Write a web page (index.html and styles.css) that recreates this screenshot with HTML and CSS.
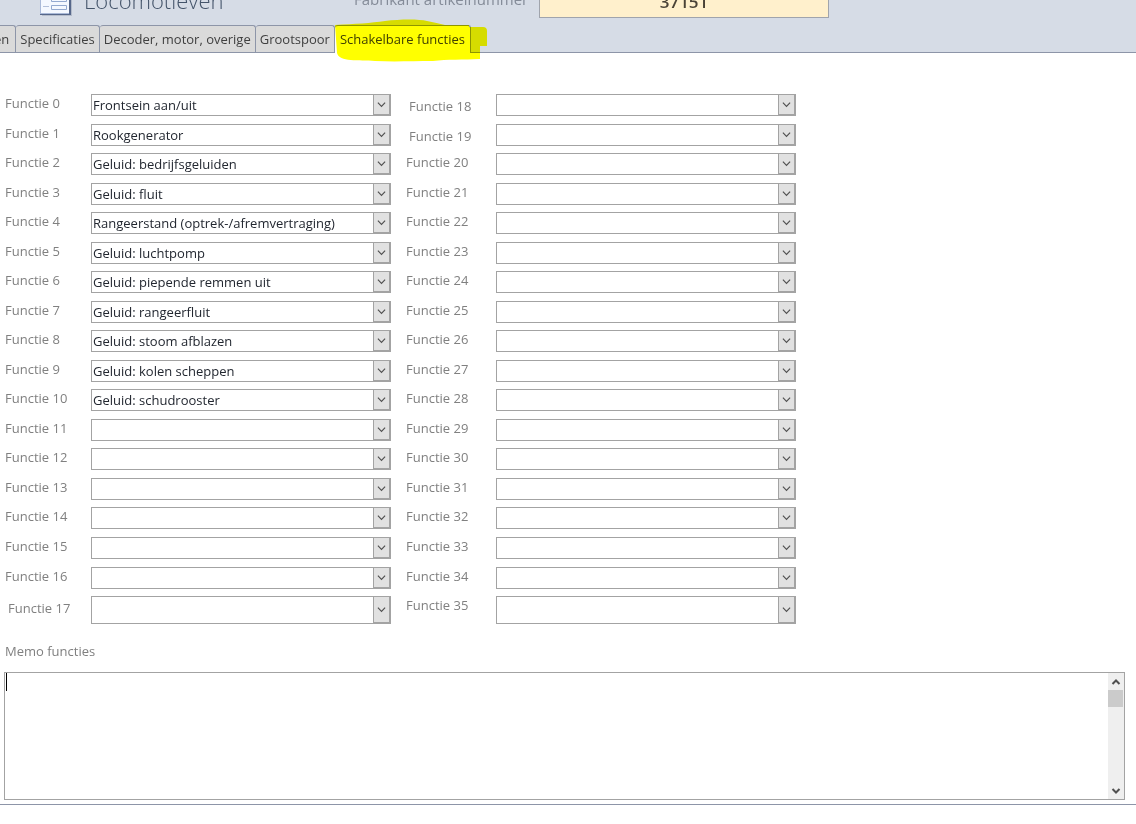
FILE: index.html
```
<!DOCTYPE html>
<html lang="nl">
<head>
<meta charset="utf-8">
<meta name="viewport" content="width=device-width, initial-scale=1">
<title>Locomotieven</title>
<link rel="stylesheet" href="styles.css">
</head>
<body>
<svg class="sprite" aria-hidden="true">
  <symbol id="chevron" viewBox="0 0 10 6"><path d="M1 1l4 4 4-4" fill="none" stroke="#505050" stroke-width="1.3"/></symbol>
</svg>
<header class="header">
  <div class="titlebar">
    <svg class="logo" viewBox="0 0 32 28" aria-hidden="true">
      <path d="M2 0h30v28H2z" fill="#b4bccb"/>
      <path d="M0 0h31v27H0z" fill="#56678a"/>
      <path d="M0 0h29v26H0z" fill="#a9b9d8"/>
      <path d="M1 0h28v25H1z" fill="#f4f8ff"/>
      <path d="M11.500 9.500h15v4h-15zM11.500 17.500h15v4h-15z" fill="#f4f8ff" stroke="#93a9d0"/>
      <path d="M3 11.500h6M3 18.500h6" stroke="#b3c0da"/>
    </svg>
    <h1 class="title">Locomotieven</h1>
    <label class="article-label" for="article">Fabrikant artikelnummer</label>
    <input class="article" id="article" value="37151">
  </div>
  <nav class="tabs">
    <button class="tab tab-first">en</button>
    <button class="tab">Specificaties</button>
    <button class="tab">Decoder, motor, overige</button>
    <button class="tab">Grootspoor</button>
    <button class="tab tab-active">Schakelbare functies
      <svg class="marker" viewBox="0 0 154 44" aria-hidden="true"><path d="M0 6C20 5 36 4 50 2C66 0 84 0 92 2Q102 4 110 6H134V8H148Q152 8 152 12V27H145V40C128 41 112 40 98 42C78 42 60 43 40 42C24 41 4 43 2 34Z" fill="#ff0"/></svg>
    </button>
  </nav>
</header>
<main class="page">
  <div class="columns">
    <div class="column">
      <div class="row"><label for="f0">Functie 0</label><span class="combo"><select id="f0"><option>Frontsein aan/uit</option></select><svg><use href="#chevron"/></svg></span></div>
      <div class="row"><label for="f1">Functie 1</label><span class="combo"><select id="f1"><option>Rookgenerator</option></select><svg><use href="#chevron"/></svg></span></div>
      <div class="row"><label for="f2">Functie 2</label><span class="combo"><select id="f2"><option>Geluid: bedrijfsgeluiden</option></select><svg><use href="#chevron"/></svg></span></div>
      <div class="row"><label for="f3">Functie 3</label><span class="combo"><select id="f3"><option>Geluid: fluit</option></select><svg><use href="#chevron"/></svg></span></div>
      <div class="row"><label for="f4">Functie 4</label><span class="combo"><select id="f4"><option>Rangeerstand (optrek-/afremvertraging)</option></select><svg><use href="#chevron"/></svg></span></div>
      <div class="row"><label for="f5">Functie 5</label><span class="combo"><select id="f5"><option>Geluid: luchtpomp</option></select><svg><use href="#chevron"/></svg></span></div>
      <div class="row"><label for="f6">Functie 6</label><span class="combo"><select id="f6"><option>Geluid: piepende remmen uit</option></select><svg><use href="#chevron"/></svg></span></div>
      <div class="row"><label for="f7">Functie 7</label><span class="combo"><select id="f7"><option>Geluid: rangeerfluit</option></select><svg><use href="#chevron"/></svg></span></div>
      <div class="row"><label for="f8">Functie 8</label><span class="combo"><select id="f8"><option>Geluid: stoom afblazen</option></select><svg><use href="#chevron"/></svg></span></div>
      <div class="row"><label for="f9">Functie 9</label><span class="combo"><select id="f9"><option>Geluid: kolen scheppen</option></select><svg><use href="#chevron"/></svg></span></div>
      <div class="row"><label for="f10">Functie 10</label><span class="combo"><select id="f10"><option>Geluid: schudrooster</option></select><svg><use href="#chevron"/></svg></span></div>
      <div class="row"><label for="f11">Functie 11</label><span class="combo"><select id="f11"></select><svg><use href="#chevron"/></svg></span></div>
      <div class="row"><label for="f12">Functie 12</label><span class="combo"><select id="f12"></select><svg><use href="#chevron"/></svg></span></div>
      <div class="row"><label for="f13">Functie 13</label><span class="combo"><select id="f13"></select><svg><use href="#chevron"/></svg></span></div>
      <div class="row"><label for="f14">Functie 14</label><span class="combo"><select id="f14"></select><svg><use href="#chevron"/></svg></span></div>
      <div class="row"><label for="f15">Functie 15</label><span class="combo"><select id="f15"></select><svg><use href="#chevron"/></svg></span></div>
      <div class="row"><label for="f16">Functie 16</label><span class="combo"><select id="f16"></select><svg><use href="#chevron"/></svg></span></div>
      <div class="row row-tall row-inset"><label for="f17">Functie 17</label><span class="combo"><select id="f17"></select><svg><use href="#chevron"/></svg></span></div>
    </div>
    <div class="column column-second">
      <div class="row row-inset"><label for="f18">Functie 18</label><span class="combo"><select id="f18"></select><svg><use href="#chevron"/></svg></span></div>
      <div class="row row-inset"><label for="f19">Functie 19</label><span class="combo"><select id="f19"></select><svg><use href="#chevron"/></svg></span></div>
      <div class="row"><label for="f20">Functie 20</label><span class="combo"><select id="f20"></select><svg><use href="#chevron"/></svg></span></div>
      <div class="row"><label for="f21">Functie 21</label><span class="combo"><select id="f21"></select><svg><use href="#chevron"/></svg></span></div>
      <div class="row"><label for="f22">Functie 22</label><span class="combo"><select id="f22"></select><svg><use href="#chevron"/></svg></span></div>
      <div class="row"><label for="f23">Functie 23</label><span class="combo"><select id="f23"></select><svg><use href="#chevron"/></svg></span></div>
      <div class="row"><label for="f24">Functie 24</label><span class="combo"><select id="f24"></select><svg><use href="#chevron"/></svg></span></div>
      <div class="row"><label for="f25">Functie 25</label><span class="combo"><select id="f25"></select><svg><use href="#chevron"/></svg></span></div>
      <div class="row"><label for="f26">Functie 26</label><span class="combo"><select id="f26"></select><svg><use href="#chevron"/></svg></span></div>
      <div class="row"><label for="f27">Functie 27</label><span class="combo"><select id="f27"></select><svg><use href="#chevron"/></svg></span></div>
      <div class="row"><label for="f28">Functie 28</label><span class="combo"><select id="f28"></select><svg><use href="#chevron"/></svg></span></div>
      <div class="row"><label for="f29">Functie 29</label><span class="combo"><select id="f29"></select><svg><use href="#chevron"/></svg></span></div>
      <div class="row"><label for="f30">Functie 30</label><span class="combo"><select id="f30"></select><svg><use href="#chevron"/></svg></span></div>
      <div class="row"><label for="f31">Functie 31</label><span class="combo"><select id="f31"></select><svg><use href="#chevron"/></svg></span></div>
      <div class="row"><label for="f32">Functie 32</label><span class="combo"><select id="f32"></select><svg><use href="#chevron"/></svg></span></div>
      <div class="row"><label for="f33">Functie 33</label><span class="combo"><select id="f33"></select><svg><use href="#chevron"/></svg></span></div>
      <div class="row"><label for="f34">Functie 34</label><span class="combo"><select id="f34"></select><svg><use href="#chevron"/></svg></span></div>
      <div class="row row-tall"><label for="f35">Functie 35</label><span class="combo"><select id="f35"></select><svg><use href="#chevron"/></svg></span></div>
    </div>
  </div>
  <label class="memo-label" for="memo">Memo functies</label>
  <div class="memo">
    <span class="caret"></span>
    <textarea id="memo"></textarea>
    <div class="scrollbar" aria-hidden="true">
      <svg viewBox="0 0 16 17"><path d="M4.500 11l3.500-3.500 3.500 3.500" fill="none" stroke="#505050" stroke-width="2"/></svg>
      <div class="thumb"></div>
      <svg class="down" viewBox="0 0 16 17"><path d="M4.500 7l3.500 3.500 3.500-3.500" fill="none" stroke="#505050" stroke-width="2"/></svg>
    </div>
  </div>
</main>
</body>
</html>
```
FILE: styles.css
```
* { box-sizing: border-box; }
body {
  margin: 0;
  background: #fff;
  color: #808080;
  font: 13px/18px "Open Sans", "Noto Sans", sans-serif;
  overflow-x: hidden;
}
button, input, select, textarea { font: inherit; margin: 0; }
.sprite { display: block; width: 0; height: 0; }
.header { background: #d6dce6; border-bottom: 1px solid #8d95a8; }
.titlebar {
  display: flex;
  align-items: flex-end;
  height: 18px;
  padding-left: 40px;
}
.logo { width: 32px; height: 28px; margin-bottom: 2px; flex: none; }
.title {
  width: 270px;
  margin: 0 0 2px 12px;
  color: #44546a;
  font-size: 22px;
  font-weight: 300;
  line-height: 32px;
}
.article-label {
  width: 185px;
  margin-bottom: 10px;
  color: #848b98;
  font-size: 15px;
  white-space: nowrap;
}
.article {
  width: 290px;
  height: 34px;
  padding: 0;
  border: 1px solid #a0a4ac;
  background: #fff0cc;
  color: #4a4236;
  font-size: 17px;
  font-weight: 600;
  text-align: center;
}
.tabs { display: flex; height: 34px; padding-top: 7px; margin-left: -10px; }
.tab {
  height: 27px;
  padding: 0 4px 1px;
  border: 1px solid #8d95a8;
  border-bottom: 0;
  border-left-width: 0;
  border-radius: 3px 3px 0 0;
  background: #dadada;
  color: #404040;
  white-space: nowrap;
}
.tab-first { padding-right: 6px; }
.tab-active { position: relative; height: 28px; padding: 0 5px 2px; background: #fff; }
.marker {
  position: absolute;
  left: 0;
  top: -7px;
  width: 154px;
  height: 44px;
  mix-blend-mode: multiply;
  pointer-events: none;
}
.page { padding: 41px 11px 4px 4px; border-bottom: 1px solid #8d95a8; }
.columns { display: flex; gap: 14px; }
.row {
  display: grid;
  grid-template-columns: 86px 300px;
  height: 30px;
  padding-left: 1px;
  align-items: start;
}
.row:nth-child(even) { height: 29px; }
.row:nth-child(16) { height: 30px; }
.row:nth-child(17) { height: 29px; }
.row.row-tall { height: 28px; }
.column-second .row { grid-template-columns: 90px 300px; }
.row-inset label { padding: 3px 0 0 3px; }
.combo { position: relative; display: block; height: 22px; }
.row-tall .combo { height: 28px; }
.combo select {
  display: block;
  width: 100%;
  height: 100%;
  padding: 0 20px 1px 1px;
  border: 1px solid #a3a3a3;
  border-radius: 0;
  background: #fff;
  color: #222730;
  appearance: none;
}
.combo svg {
  position: absolute;
  inset: 0 0 0 auto;
  width: 18px;
  height: 100%;
  padding: 5px 3px;
  border: solid #a3a3a3;
  border-width: 1px 2px 2px 1px;
  background: #e1e1e1;
  pointer-events: none;
}
.memo-label { display: block; margin: 18px 0 12px 1px; }
.memo {
  position: relative;
  display: flex;
  height: 128px;
  border: 1px solid #a3a3a3;
}
.memo textarea { flex: 1; border: 0; padding: 1px 2px; resize: none; color: #222730; outline: 0; }
.caret { position: absolute; left: 1px; top: 0; width: 1px; height: 18px; background: #000; }
.scrollbar { display: flex; flex-direction: column; width: 16px; background: #efefef; }
.scrollbar svg { width: 16px; height: 17px; }
.scrollbar .down { margin-top: auto; }
.thumb { width: 15px; height: 17px; background: #cbcbcb; }
```
